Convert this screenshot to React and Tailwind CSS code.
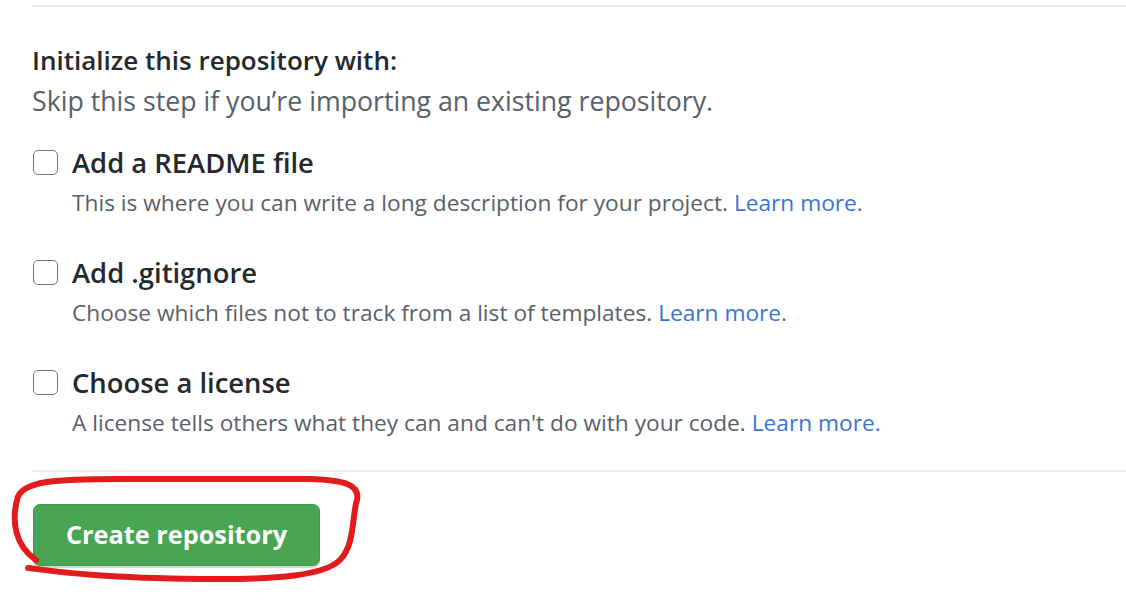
export default function App() {
  const options = [
    {
      label: "Add a README file",
      note: "This is where you can write a long description for your project.",
    },
    {
      label: "Add .gitignore",
      note: "Choose which files not to track from a list of templates.",
    },
    {
      label: "Choose a license",
      note: "A license tells others what they can and can't do with your code.",
    },
  ];

  return (
    <div
      className="relative w-[1126px] h-[606px] bg-white pl-8 pt-[5px] overflow-hidden"
      style={{ fontFamily: '"Open Sans", "Noto Sans", sans-serif' }}
    >
      <div className="border-t-2 border-[#eaeaef]" />

      <div className="pt-[37px]">
        <h3 className="text-[26px] leading-[32px] font-semibold text-[#24292e]">
          Initialize this repository with:
        </h3>
        <p className="text-[26.7px] leading-[36px] text-[#586069] mt-[7px]">
          Skip this step if you’re importing an existing repository.
        </p>
      </div>

      <div className="mt-[28px] flex flex-col gap-[38px]">
        {options.map((opt) => (
          <div key={opt.label} className="flex items-start">
            <div className="mt-[3px] ml-px w-[25px] h-[25px] shrink-0 rounded-[5px] border border-[#767676] bg-white" />
            <div className="ml-[14px]">
              <div className="text-[27.4px] leading-[32px] font-semibold text-[#24292e]">
                {opt.label}
              </div>
              <div className="mt-[8px] text-[22.7px] leading-[32px] text-[#586069]">
                {opt.note}{" "}
                <a className="text-[#3973d3]">Learn more.</a>
              </div>
            </div>
          </div>
        ))}
      </div>

      <div className="mt-[31px] border-t-2 border-[#eaeaef]" />

      <button className="mt-[32px] ml-px w-[287px] h-[62px] rounded-[7px] bg-[#48a553] border border-[#3f9a4a] shadow-[0_2px_0_#d8d8d8] text-white text-[25.3px] font-bold">
        Create repository
      </button>

      <svg
        className="absolute left-0 top-0 pointer-events-none"
        width="1126"
        height="606"
        viewBox="0 0 1126 606"
      >
        <path
          d="M 28 568 C 60 572, 100 578, 200 579 C 280 580, 325 575, 340 560 C 355 545, 352 515, 357 500 C 360 485, 345 480, 310 479 L 120 479 C 60 479, 20 480, 17 500 C 12 520, 14 545, 36 560"
          fill="none"
          stroke="#e21c1c"
          strokeWidth="6"
          strokeLinecap="round"
        />
      </svg>
    </div>
  );
}
